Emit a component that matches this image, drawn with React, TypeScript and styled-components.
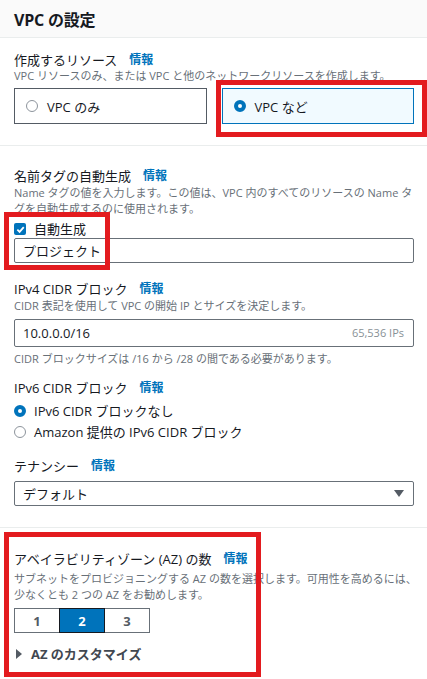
import styled, { createGlobalStyle } from "styled-components";

const GlobalStyle = createGlobalStyle`
    html, body {
        margin: 0;
        padding: 0;
        background: #fff;
    }
    body {
        color: #16191f;
        font-family: "Open Sans", "Noto Sans CJK JP", sans-serif;
    }
`;

const Page = styled.div`
    width: 427px;
    height: 679px;
    overflow: hidden;
    background: #fff;
`;

const Header = styled.header`
    height: 37px;
    display: flex;
    align-items: center;
    padding: 0 14px;
    background: #fafafa;
    border-bottom: 1px solid #eaeded;
`;

const Title = styled.h2`
    margin: 0;
    font-size: 16px;
    font-weight: 700;
    letter-spacing: -0.2px;
`;

const Section = styled.section<{ $top: number; $bottom: number; $last?: boolean }>`
    position: relative;
    padding: ${(p) => p.$top}px 13px ${(p) => p.$bottom}px 14px;
    border-bottom: ${(p) => (p.$last ? "none" : "1px solid #eaeded")};
`;

const Label = styled.div<{ $gap?: number }>`
    display: flex;
    align-items: center;
    gap: 12px;
    height: 16px;
    margin-top: ${(p) => p.$gap ?? 0}px;
    font-size: 13px;
    line-height: 16px;
    white-space: nowrap;
`;

const Info = styled.a`
    color: #0073bb;
    font-size: 12px;
    font-weight: 700;
    line-height: 16px;
    text-decoration: none;
`;

const Description = styled.p<{ $gap?: number }>`
    margin: ${(p) => p.$gap ?? 0}px 0 0;
    color: #687078;
    font-size: 11px;
    line-height: 16px;
    white-space: nowrap;
`;

const Tiles = styled.div`
    display: grid;
    grid-template-columns: 1fr 1fr;
    gap: 15px;
    margin-top: 4px;
`;

const TileWrap = styled.div`
    position: relative;
`;

const Tile = styled.label<{ $selected?: boolean }>`
    display: flex;
    align-items: center;
    gap: 9px;
    height: 36px;
    box-sizing: border-box;
    padding: 0 11px;
    border: 1px solid ${(p) => (p.$selected ? "#0073bb" : "#545b64")};
    background: ${(p) => (p.$selected ? "#f1faff" : "#fff")};
    font-size: 13px;
`;

const Radio = styled.span<{ $checked?: boolean }>`
    flex: none;
    width: 12px;
    height: 12px;
    box-sizing: border-box;
    border-radius: 50%;
    border: ${(p) => (p.$checked ? "4px solid #0073bb" : "1.5px solid #8d949c")};
    background: #fff;
`;

const Annotation = styled.div<{ $top: number; $left: number; $width: number; $height: number }>`
    position: absolute;
    top: ${(p) => p.$top}px;
    left: ${(p) => p.$left}px;
    width: ${(p) => p.$width}px;
    height: ${(p) => p.$height}px;
    box-sizing: border-box;
    border: 5px solid #e31b1f;
    pointer-events: none;
`;

const AutoGroup = styled.div`
    position: relative;
    margin-top: 4px;
`;

const CheckRow = styled.label`
    display: flex;
    align-items: center;
    gap: 8px;
    height: 16px;
    font-size: 13px;
    line-height: 16px;
`;

const Checkbox = styled.span`
    width: 12px;
    height: 12px;
    border-radius: 2px;
    background: #0073bb;
    display: flex;
    align-items: center;
    justify-content: center;
`;

const Field = styled.div<{ $height: number; $gap?: number }>`
    display: flex;
    align-items: center;
    justify-content: space-between;
    height: ${(p) => p.$height}px;
    margin-top: ${(p) => p.$gap ?? 0}px;
    box-sizing: border-box;
    padding: 0 9px 0 8px;
    border: 1px solid #687078;
    border-radius: 2px;
    font-size: 13px;
    line-height: 16px;
`;

const Suffix = styled.span`
    color: #879196;
    font-size: 11px;
`;

const Options = styled.div`
    display: flex;
    flex-direction: column;
    margin-top: 4px;
`;

const Option = styled.label`
    display: flex;
    align-items: center;
    gap: 8px;
    height: 21px;
    font-size: 13px;
    line-height: 16px;
`;

const Caret = styled.span`
    width: 0;
    height: 0;
    border-left: 5px solid transparent;
    border-right: 5px solid transparent;
    border-top: 7px solid #545b64;
`;

const Segments = styled.div`
    display: flex;
    margin-top: 5px;
`;

const Segment = styled.button<{ $active?: boolean }>`
    width: 46px;
    height: 25px;
    margin-left: -1px;
    padding: 0;
    border: 1px solid ${(p) => (p.$active ? "#16191f" : "#687078")};
    background: ${(p) => (p.$active ? "#0073bb" : "#fff")};
    color: ${(p) => (p.$active ? "#fff" : "#545b64")};
    font-family: "Open Sans", sans-serif;
    font-size: 13px;
    font-weight: 700;
    position: relative;
    z-index: ${(p) => (p.$active ? 1 : 0)};
    &:first-child {
        margin-left: 0;
    }
`;

const Expander = styled.div`
    display: flex;
    align-items: center;
    gap: 9px;
    margin-top: 13px;
    padding-left: 2px;
    height: 16px;
    font-size: 13px;
    line-height: 16px;
    font-weight: 700;
    color: #414750;
`;

const ExpandCaret = styled.span`
    width: 0;
    height: 0;
    border-top: 5px solid transparent;
    border-bottom: 5px solid transparent;
    border-left: 6px solid #545b64;
`;

export default function App() {
    return (
        <>
            <GlobalStyle />
            <Page>
                <Header>
                    <Title>VPC の設定</Title>
                </Header>

                <Section $top={14} $bottom={21}>
                    <Label>作成するリソース <Info>情報</Info></Label>
                    <Description>VPC リソースのみ、または VPC と他のネットワークリソースを作成します。</Description>
                    <Tiles>
                        <Tile>
                            <Radio />
                            VPC のみ
                        </Tile>
                        <TileWrap>
                            <Tile $selected>
                                <Radio $checked />
                                VPC など
                            </Tile>
                            <Annotation $top={-8} $left={-6} $width={211} $height={57} />
                        </TileWrap>
                    </Tiles>
                </Section>

                <Section $top={22} $bottom={21}>
                    <Label>名前タグの自動生成 <Info>情報</Info></Label>
                    <Description $gap={1}>
                        Name タグの値を入力します。この値は、VPC 内のすべてのリソースの Name タ
                        <br />
                        グを自動生成するのに使用されます。
                    </Description>
                    <AutoGroup>
                        <CheckRow>
                            <Checkbox>
                                <svg width="9" height="9" viewBox="0 0 10 10">
                                    <path d="M1.5 5.2 4 7.6 8.6 2.4" fill="none" stroke="#fff" strokeWidth="2" />
                                </svg>
                            </Checkbox>
                            自動生成
                        </CheckRow>
                        <Field $height={25} $gap={1}>プロジェクト</Field>
                        <Annotation $top={-9} $left={-10} $width={106} $height={58} />
                    </AutoGroup>

                    <Label $gap={18}>IPv4 CIDR ブロック <Info>情報</Info></Label>
                    <Description $gap={1}>CIDR 表記を使用して VPC の開始 IP とサイズを決定します。</Description>
                    <Field $height={28} $gap={5}>
                        10.0.0.0/16
                        <Suffix>65,536 IPs</Suffix>
                    </Field>
                    <Description $gap={4}>CIDR ブロックサイズは /16 から /28 の間である必要があります。</Description>

                    <Label $gap={13}>IPv6 CIDR ブロック <Info>情報</Info></Label>
                    <Options>
                        <Option>
                            <Radio $checked />
                            IPv6 CIDR ブロックなし
                        </Option>
                        <Option>
                            <Radio />
                            Amazon 提供の IPv6 CIDR ブロック
                        </Option>
                    </Options>

                    <Label $gap={16}>テナンシー <Info>情報</Info></Label>
                    <Field $height={25} $gap={7}>
                        デフォルト
                        <Caret />
                    </Field>
                </Section>

                <Section $top={23} $bottom={0} $last>
                    <Label>アベイラビリティゾーン (AZ) の数 <Info>情報</Info></Label>
                    <Description $gap={4}>
                        サブネットをプロビジョニングする AZ の数を選択します。可用性を高めるには、
                        <br />
                        少なくとも 2 つの AZ をお勧めします。
                    </Description>
                    <Segments>
                        <Segment>1</Segment>
                        <Segment $active>2</Segment>
                        <Segment>3</Segment>
                    </Segments>
                    <Expander>
                        <ExpandCaret />
                        AZ のカスタマイズ
                    </Expander>
                    <Annotation $top={4} $left={4} $width={257} $height={145} />
                </Section>
            </Page>
        </>
    );
}
